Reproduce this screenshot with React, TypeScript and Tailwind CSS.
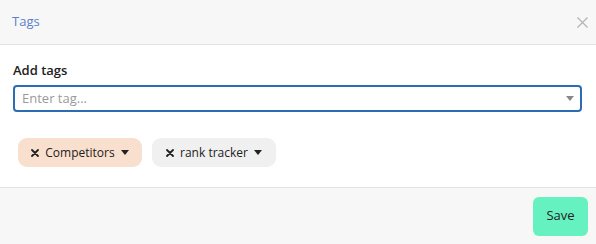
import React from "react";

const Caret = () => (
  <svg width="8" height="5" viewBox="0 0 8 5" className="ml-[6px]">
    <path d="M0 0 L8 0 L4 5 Z" fill="#222" />
  </svg>
);

const X = () => (
  <svg width="8" height="8" viewBox="0 0 8 8" className="mr-[6px]">
    <path d="M1 1 L7 7 M7 1 L1 7" stroke="#222" strokeWidth="1.8" strokeLinecap="round" />
  </svg>
);

export default function App() {
  return (
    <div
      className="w-[596px] h-[244px] bg-white flex flex-col"
      style={{ fontFamily: '"Open Sans", sans-serif' }}
    >
      <div className="h-[45px] bg-[#f7f7f7] border-b border-[#e3e3e3] flex items-center justify-between pl-[12px] pr-[8px]">
        <span className="text-[13px] text-[#5b7fc8]">Tags</span>
        <svg width="11" height="11" viewBox="0 0 11 11">
          <path d="M0.5 0.5 L10.5 10.5 M10.5 0.5 L0.5 10.5" stroke="#b5b5b5" strokeWidth="1.3" />
        </svg>
      </div>
      <div className="flex-1 flex flex-col px-[13px] pt-[16px]">
        <div className="text-[13px] font-semibold text-[#222] leading-[18px] mb-[6px]">Add tags</div>
        <div className="h-[27px] w-[569px] border-2 border-[#2b6cb3] rounded-[4px] flex items-center justify-between pl-[7px] pr-[6px]">
          <span className="text-[13px] text-[#9a9a9a]">Enter tag...</span>
          <svg width="8" height="5" viewBox="0 0 8 5">
            <path d="M0 0 L8 0 L4 5 Z" fill="#888" />
          </svg>
        </div>
        <div className="flex gap-[10px] mt-[26px] pl-[5px]">
          <div className="h-[29px] w-[124px] rounded-[9px] bg-[#f9dfcd] flex items-center justify-center text-[12px] text-[#222]">
            <X />
            Competitors
            <Caret />
          </div>
          <div className="h-[29px] w-[124px] rounded-[9px] bg-[#f0f0f0] flex items-center justify-center text-[12px] text-[#222]">
            <X />
            rank tracker
            <Caret />
          </div>
        </div>
      </div>
      <div className="h-[57px] bg-[#f7f7f7] border-t border-[#e3e3e3] flex items-center justify-end pr-[8px]">
        <button className="w-[55px] h-[39px] rounded-[6px] bg-[#66f1c1] text-[13px] text-[#222] flex items-center justify-center">
          Save
        </button>
      </div>
    </div>
  );
}
